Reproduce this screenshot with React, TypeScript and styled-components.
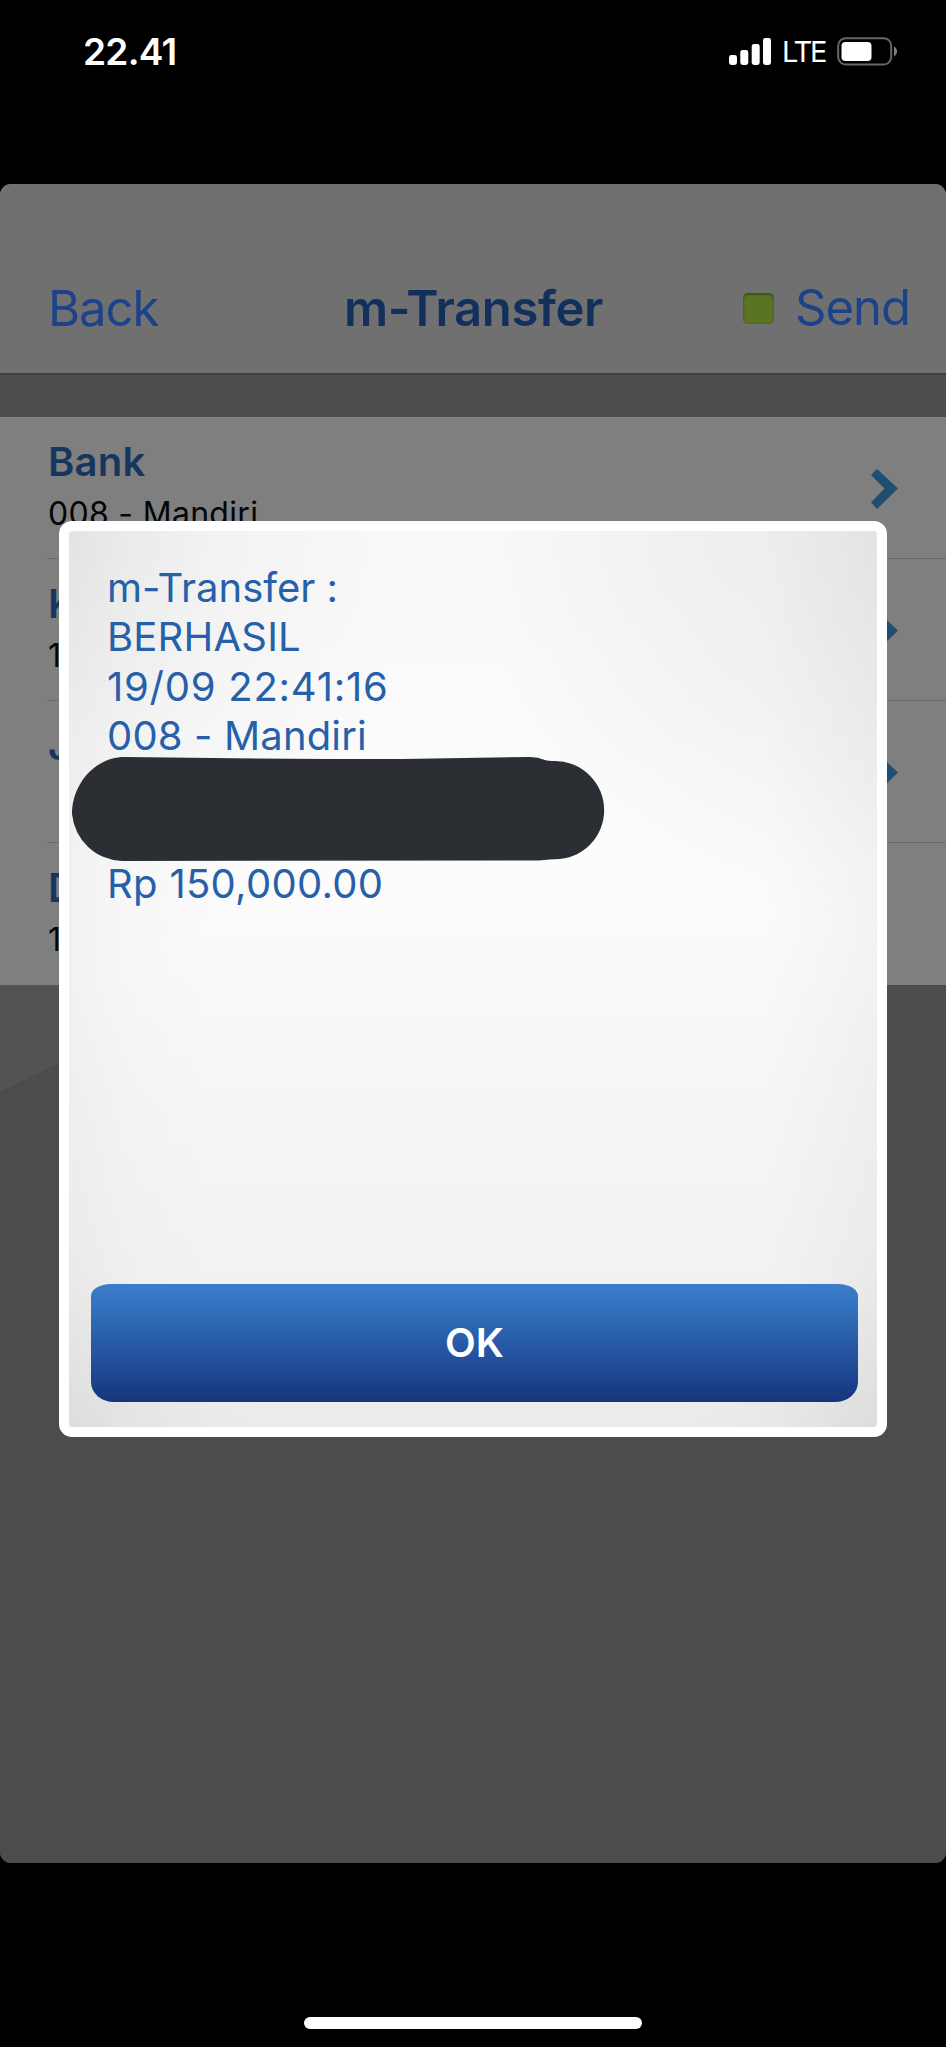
import React from "react";
import styled, { createGlobalStyle } from "styled-components";

const GlobalStyle = createGlobalStyle`
  html, body { margin: 0; padding: 0; background: #000; }
  * { box-sizing: border-box; }
`;

const Screen = styled.div`
  position: relative;
  display: flex;
  flex-direction: column;
  width: 946px;
  height: 2047px;
  overflow: hidden;
  background: #000;
  font-family: Inter, "Liberation Sans", sans-serif;
`;

const StatusBar = styled.div`
  display: flex;
  align-items: flex-start;
  justify-content: space-between;
  height: 184px;
  padding: 29px 49px 0 83px;
`;

const Time = styled.span`
  color: #fff;
  font-size: 37px;
  font-weight: 600;
  line-height: 45px;
  letter-spacing: -0.7px;
`;

const Indicators = styled.div`
  display: flex;
  align-items: center;
  height: 45px;
`;

const Carrier = styled.span`
  margin: 1px 10px 0 10px;
  width: 45px;
  color: #fff;
  font-size: 29px;
  line-height: 36px;
  letter-spacing: -2.2px;
`;

const AppPanel = styled.main`
  display: flex;
  flex-direction: column;
  height: 1679px;
  border-radius: 11px;
  overflow: hidden;
  background: #4c4c4c;
`;

const NavBar = styled.header`
  display: grid;
  grid-template-columns: 1fr auto 1fr;
  align-items: start;
  height: 191px;
  padding: 95px 36px 0 48px;
  background: #707070;
  border-bottom: 2px solid #404040;
`;

const NavAction = styled.span`
  color: #1c4289;
  font-size: 49px;
  line-height: 60px;
  letter-spacing: -1px;
`;

const NavTitle = styled.h1`
  margin: 0 0 0 -11px;
  color: #12305c;
  font-size: 49px;
  font-weight: 600;
  line-height: 60px;
  letter-spacing: -0.4px;
`;

const SendGroup = styled.div`
  display: flex;
  justify-content: flex-end;
  align-items: center;
  gap: 21px;
  margin-top: -1px;
`;

const Led = styled.i`
  width: 31px;
  height: 31px;
  border-radius: 5px;
  background: #5a7424;
  box-shadow: inset 0 3px 2px -1px #3f5218, inset 0 0 2px 1px #4e6620;
`;

const List = styled.ul`
  list-style: none;
  margin: 42px 0 0;
  padding: 0;
  background: #7f7f7f;
`;

const Row = styled.li`
  display: flex;
  justify-content: space-between;
  height: 142px;
  margin-left: 47px;
  padding-right: 48px;
  border-bottom: 1px solid #6b6b6d;
  &:last-child { border-bottom-color: transparent; }
`;

const RowText = styled.div`
  display: flex;
  flex-direction: column;
  padding: 20px 0 0 1px;
`;

const RowTitle = styled.span`
  color: #16365f;
  font-size: 40px;
  font-weight: 600;
  line-height: 49px;
  letter-spacing: 0.2px;
`;

const RowValue = styled.span`
  margin-top: 8px;
  color: #050505;
  font-size: 32px;
  line-height: 40px;
  letter-spacing: 0.3px;
`;

const Chevron = styled.svg`
  width: 27px;
  height: 40px;
  margin-top: 52px;
`;

const Backdrop = styled.div`
  flex: 1;
  background: #4c4c4c;
  &::before {
    content: "";
    display: block;
    width: 220px;
    height: 107px;
    background: #535353;
    clip-path: polygon(0 0, 100% 0, 0 100%);
  }
`;

const Dialog = styled.section`
  position: absolute;
  top: 521px;
  left: 59px;
  display: flex;
  flex-direction: column;
  width: 828px;
  height: 916px;
  padding: 32px 19px 25px 22px;
  border: 10px solid #fff;
  border-radius: 13px;
  background:
    linear-gradient(90deg, rgba(0,0,0,0.03), rgba(0,0,0,0.012) 7%, rgba(0,0,0,0) 18%, rgba(0,0,0,0) 86%, rgba(0,0,0,0.03)) padding-box,
    radial-gradient(ellipse 50% 45% at 100% 0%, rgba(0,0,0,0.06), rgba(0,0,0,0.035) 50%, rgba(0,0,0,0) 100%) padding-box,
    radial-gradient(ellipse 42% 50% at 0% 0%, rgba(0,0,0,0.06), rgba(0,0,0,0.025) 50%, rgba(0,0,0,0) 100%) padding-box,
    radial-gradient(ellipse 25% 18% at 0% 100%, rgba(0,0,0,0.035), rgba(0,0,0,0) 100%) padding-box,
    radial-gradient(ellipse 25% 18% at 100% 100%, rgba(0,0,0,0.035), rgba(0,0,0,0) 100%) padding-box,
    linear-gradient(180deg, #f9f9f9 0%, #fcfcfc 38%, #f6f6f6 62%, #f2f2f2 82%, #ececec 100%) padding-box,
    #fff;
`;

const Message = styled.div`
  display: flex;
  flex-direction: column;
  flex: 1;
  padding-left: 16px;
`;

const Line = styled.span<{ $spacing: number }>`
  color: #2660a9;
  font-size: 40px;
  line-height: 49.3px;
  letter-spacing: ${(p) => p.$spacing}px;
`;

const Redaction = styled.svg`
  flex: none;
  width: 534px;
  height: 104px;
  margin: -3px 0 -2.4px -35px;
`;

const OkButton = styled.button`
  flex: none;
  height: 118px;
  padding: 0 0 2px;
  border: 0;
  border-radius: 20px 20px 23px 23px / 12px 12px 20px 20px;
  background: linear-gradient(180deg, #3a7dcb 0%, #3373bf 18%, #24529f 60%, #15357b 100%);
  color: #fff;
  font-family: inherit;
  font-size: 40px;
  font-weight: 600;
`;

const HomeIndicator = styled.div`
  width: 338px;
  height: 12px;
  margin: 154px auto 0;
  border-radius: 6px;
  background: #fff;
`;

const rows = [
  { title: "Bank", value: "008 - Mandiri", arrow: true },
  { title: "K", value: "1", arrow: true },
  { title: "J", value: "", arrow: true },
  { title: "D", value: "1", arrow: false },
];

function SignalIcon() {
  return (
    <svg width="43" height="28" viewBox="0 0 43 28" fill="#fff">
      <rect x="0" y="17" width="8" height="10" rx="2.4" />
      <rect x="11.3" y="12" width="8" height="15" rx="2.4" />
      <rect x="22.7" y="6" width="8" height="21" rx="2.4" />
      <rect x="34" y="0" width="8" height="27" rx="2.4" />
    </svg>
  );
}

function BatteryIcon() {
  return (
    <svg width="60" height="29" viewBox="0 0 60 29">
      <rect x="1.2" y="1.2" width="53" height="26.4" rx="7.5" fill="none" stroke="#666" strokeWidth="2" />
      <rect x="4.5" y="5" width="30" height="19" rx="4" fill="#fff" />
      <path d="M57 9.5c1.700.8 3 2.600 3 4.900s-1.300 4.100-3 4.900z" fill="#808080" />
    </svg>
  );
}

export default function App() {
  return (
    <Screen>
      <GlobalStyle />
      <StatusBar>
        <Time>22.41</Time>
        <Indicators>
          <SignalIcon />
          <Carrier>LTE</Carrier>
          <BatteryIcon />
        </Indicators>
      </StatusBar>
      <AppPanel>
        <NavBar>
          <NavAction>Back</NavAction>
          <NavTitle>m-Transfer</NavTitle>
          <SendGroup>
            <Led />
            <NavAction>Send</NavAction>
          </SendGroup>
        </NavBar>
        <List>
          {rows.map((row) => (
            <Row key={row.title}>
              <RowText>
                <RowTitle>{row.title}</RowTitle>
                <RowValue>{row.value}</RowValue>
              </RowText>
              {row.arrow && (
                <Chevron viewBox="0 0 27 40">
                  <path d="M6 0 27 19.500 6 40 0 33.500 13.500 19.500 0 6z" fill="#1f4e70" />
                </Chevron>
              )}
            </Row>
          ))}
        </List>
        <Backdrop />
      </AppPanel>
      <HomeIndicator />
      <Dialog>
        <Message>
          <Line $spacing={0}>m-Transfer :</Line>
          <Line $spacing={0.2}>BERHASIL</Line>
          <Line $spacing={0.75}>19/09 22:41:16</Line>
          <Line $spacing={0.15}>008 - Mandiri</Line>
          <Redaction viewBox="0 0 534 104">
            <path
              d="M53 0 Q190 2 330 2 L458 0 Q466 0 473 3 Q476 4 483 4 A49 49 0 0 1 483 102.300 Q478 102.300 472 103 Q468 103.500 458 103.500 L50 104 A52 52 0 0 1 0 57 C0 28 22 0 53 0z"
              fill="#2b2f33"
            />
          </Redaction>
          <Line $spacing={0.3}>Rp 150,000.00</Line>
        </Message>
        <OkButton>OK</OkButton>
      </Dialog>
    </Screen>
  );
}
